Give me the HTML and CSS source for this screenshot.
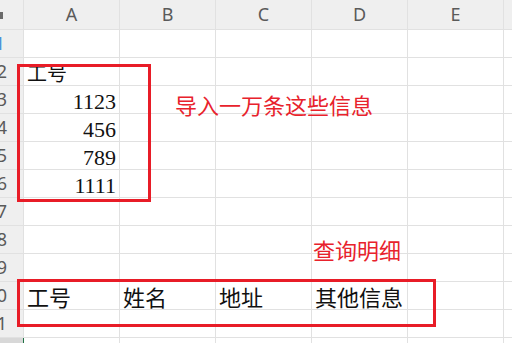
FILE: index.html
```html
<!DOCTYPE html>
<html lang="zh-CN">
<head>
<meta charset="utf-8">
<title>Sheet</title>
<link rel="stylesheet" href="styles.css">
</head>
<body>
<div class="wrap">
  <div class="sheet">
    <div class="hd corner"><span class="tri"></span></div>
    <div class="hd">A</div><div class="hd">B</div><div class="hd">C</div><div class="hd">D</div><div class="hd">E</div><div class="hd"></div>

    <div class="rn active"><span>1</span></div><div class="c"></div><div class="c"></div><div class="c"></div><div class="c"></div><div class="c"></div><div class="c"></div>
    <div class="rn"><span>2</span></div><div class="c cjk">工号</div><div class="c"></div><div class="c"></div><div class="c"></div><div class="c"></div><div class="c"></div>
    <div class="rn"><span>3</span></div><div class="c num">1123</div><div class="c"></div><div class="c"></div><div class="c"></div><div class="c"></div><div class="c"></div>
    <div class="rn"><span>4</span></div><div class="c num">456</div><div class="c"></div><div class="c"></div><div class="c"></div><div class="c"></div><div class="c"></div>
    <div class="rn"><span>5</span></div><div class="c num">789</div><div class="c"></div><div class="c"></div><div class="c"></div><div class="c"></div><div class="c"></div>
    <div class="rn"><span>6</span></div><div class="c num">1111</div><div class="c"></div><div class="c"></div><div class="c"></div><div class="c"></div><div class="c"></div>
    <div class="rn"><span>7</span></div><div class="c"></div><div class="c"></div><div class="c"></div><div class="c"></div><div class="c"></div><div class="c"></div>
    <div class="rn"><span>8</span></div><div class="c"></div><div class="c"></div><div class="c"></div><div class="c"></div><div class="c"></div><div class="c"></div>
    <div class="rn"><span>9</span></div><div class="c"></div><div class="c"></div><div class="c"></div><div class="c"></div><div class="c"></div><div class="c"></div>
    <div class="rn"><span>10</span></div><div class="c big">工号</div><div class="c big">姓名</div><div class="c big">地址</div><div class="c big">其他信息</div><div class="c"></div><div class="c"></div>
    <div class="rn"><span>11</span></div><div class="c"></div><div class="c"></div><div class="c"></div><div class="c"></div><div class="c"></div><div class="c"></div>
    <div class="rn sel"></div><div class="c"></div><div class="c"></div><div class="c"></div><div class="c"></div><div class="c"></div><div class="c"></div>
  </div>

  <div class="note note-import">导入一万条这些信息</div>
  <div class="note note-query">查询明细</div>
  <div class="box box-ids"></div>
  <div class="box box-detail"></div>
</div>
</body>
</html>
```

FILE: styles.css
```css
html, body {
  margin: 0;
  padding: 0;
  background: #ffffff;
}
.wrap {
  position: relative;
  width: 512px;
  height: 343px;
  overflow: hidden;
}
.sheet {
  display: grid;
  grid-template-columns: 23px repeat(5, 95px) 1fr;
  grid-template-rows: 29px repeat(12, 27px);
  gap: 1px;
  background: #e1e1e1;
  width: 512px;
  height: 343px;
  overflow: hidden;
}
.hd {
  background: #efefef;
  color: #5a5a5a;
  font-family: "Noto Sans", sans-serif;
  font-size: 18px;
  line-height: 29px;
  text-align: center;
}
.corner {
  display: flex;
  align-items: center;
}
.tri {
  display: block;
  width: 3px;
  height: 7px;
  margin-top: 1px;
  background: #6a6a6a;
}
.rn {
  background: #efefef;
  color: #5a5a5a;
  font-family: "Noto Sans", sans-serif;
  font-size: 18px;
  line-height: 27px;
  display: flex;
  justify-content: flex-end;
  padding-right: 16px;
  overflow: hidden;
  white-space: nowrap;
}
.rn span {
  flex: none;
}
.rn.active {
  color: #4a90d9;
  padding-right: 18px;
}
.rn.sel {
  background: #d8d8d8;
  box-shadow: 1px 0 0 #217346;
}
.c {
  background: #ffffff;
  display: flex;
  align-items: flex-end;
  color: #111111;
  white-space: nowrap;
  overflow: visible;
}
.cjk {
  font-family: "Noto Sans CJK SC", sans-serif;
  font-size: 20px;
  line-height: 20px;
  padding-left: 3px;
  padding-bottom: 2px;
}
.num {
  justify-content: flex-end;
  font-family: "Liberation Serif", serif;
  font-size: 22px;
  line-height: 22px;
  padding-right: 3px;
}
.big {
  font-family: "Noto Sans CJK SC", sans-serif;
  font-size: 22px;
  line-height: 22px;
  padding-left: 3px;
  padding-bottom: 2px;
}
.note {
  position: absolute;
  color: #e8222c;
  font-family: "Noto Sans CJK SC", sans-serif;
  font-size: 22px;
  line-height: 22px;
  white-space: nowrap;
}
.note-import {
  left: 175px;
  top: 93px;
}
.note-query {
  left: 313px;
  top: 238px;
}
.box {
  position: absolute;
  box-sizing: border-box;
  border: 3px solid #e81c27;
}
.box-ids {
  left: 17px;
  top: 64px;
  width: 134px;
  height: 138px;
}
.box-detail {
  left: 17px;
  top: 279px;
  width: 419px;
  height: 48px;
}
```
